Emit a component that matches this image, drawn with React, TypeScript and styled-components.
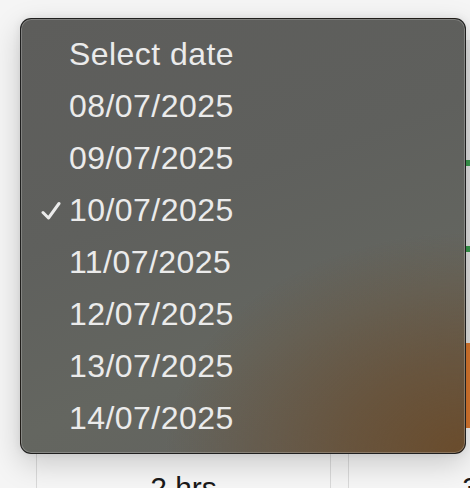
import React from "react";
import styled, { createGlobalStyle } from "styled-components";

const Global = createGlobalStyle`
  html, body { margin: 0; padding: 0; }
  body {
    background: #f4f4f4;
    font-family: "Liberation Sans", Arial, sans-serif;
    overflow: hidden;
  }
`;

const Page = styled.div`
  position: relative;
  width: 470px;
  height: 488px;
  overflow: hidden;
  background: #f5f5f5;
`;

const Board = styled.div`
  display: grid;
  grid-template-columns: 295px 295px;
  column-gap: 17px;
  padding: 40px 0 0 36px;
  height: 448px;
`;

const Column = styled.div`
  display: grid;
  grid-template-rows: 120px 6px 80px 6px 91px 85px 26px 1fr;
  border-left: 1px solid #d9d9d9;
  border-right: 1px solid #d9d9d9;
  background: #f3f3f3;
`;

const Bar = styled.div<{ $color: string }>`
  background: ${(p) => p.$color};
`;

const Spacer = styled.div<{ $bg?: string }>`
  background: ${(p) => p.$bg || "transparent"};
`;

const Hours = styled.div`
  display: flex;
  justify-content: center;
  align-items: flex-start;
  padding-top: 17px;
  font-size: 30px;
  color: #1a1a1a;
  background: #f6f6f6;
`;

const Menu = styled.div`
  position: absolute;
  left: 20px;
  top: 18px;
  width: 446px;
  height: 436px;
  box-sizing: border-box;
  border-radius: 11px;
  border: 1px solid rgba(20, 20, 20, 0.85);
  box-shadow: inset 0 0 0 1px rgba(255, 255, 255, 0.22),
    0 10px 30px rgba(0, 0, 0, 0.18), 0 0 8px rgba(0, 0, 0, 0.08);
  background:
    radial-gradient(ellipse 300px 220px at 100% 100%, rgba(106, 76, 44, 1) 0%, rgba(106, 76, 44, 0.65) 40%, rgba(106, 76, 44, 0) 100%),
    linear-gradient(160deg, #5d5d5b 0%, #5f605d 40%, #646660 70%, #62625e 100%);
  padding: 10px 0 9px;
  display: flex;
  flex-direction: column;
`;

const Item = styled.div`
  position: relative;
  height: 52px;
  display: flex;
  align-items: center;
  padding-left: 48px;
  font-size: 32px;
  letter-spacing: 0.45px;
  color: #ebebeb;
  white-space: nowrap;
`;

const Check = styled.svg`
  position: absolute;
  left: 20px;
  top: 50%;
  margin-top: -10px;
  width: 20px;
  height: 20px;
`;

const dates = [
  "08/07/2025",
  "09/07/2025",
  "10/07/2025",
  "11/07/2025",
  "12/07/2025",
  "13/07/2025",
  "14/07/2025",
];

export default function App() {
  return (
    <>
      <Global />
      <Page>
        <Board>
          <Column>
            <Spacer />
            <Spacer />
            <Spacer />
            <Spacer />
            <Spacer />
            <Spacer />
            <Spacer />
            <Hours>2 hrs</Hours>
          </Column>
          <Column>
            <Spacer $bg="#e2e2e2" />
            <Bar $color="#3a9a4e" />
            <Spacer $bg="#e2e2e2" />
            <Bar $color="#3a9a4e" />
            <Spacer $bg="#e2e2e2" />
            <Bar $color="#d9782f" />
            <Spacer $bg="#f6f6f6" />
            <Hours>3 hrs</Hours>
          </Column>
        </Board>
        <Menu>
          <Item>Select date</Item>
          {dates.map((d) => (
            <Item key={d}>
              {d === "10/07/2025" && (
                <Check viewBox="0 0 20 20">
                  <path
                    d="M2 11.5 L7.5 17 L18 2.5"
                    fill="none"
                    stroke="#ebebeb"
                    strokeWidth="3"
                    strokeLinecap="round"
                    strokeLinejoin="round"
                  />
                </Check>
              )}
              {d}
            </Item>
          ))}
        </Menu>
      </Page>
    </>
  );
}
